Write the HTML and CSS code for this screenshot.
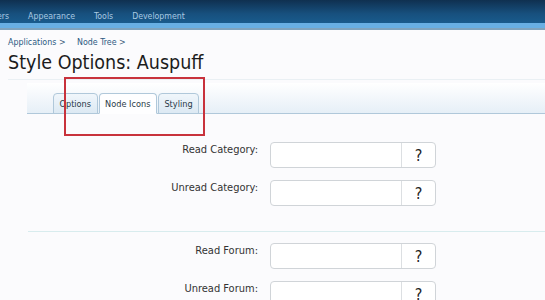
FILE: index.html
```html
<!DOCTYPE html>
<html lang="en">
<head>
    <meta charset="UTF-8">
    <title>Style Options: Auspuff</title>
    <link rel="stylesheet" href="styles.css">
</head>
<body>

    <!-- Admin navigation -->
    <div class="top-nav">
        <a href="#">ers</a>
        <a href="#">Appearance</a>
        <a href="#">Tools</a>
        <a href="#">Development</a>
    </div>
    <div class="nav-strip"></div>

    <div class="page">
        <div class="breadcrumb">
            <a href="#">Applications</a> <span class="sep">&gt;</span>
            <a href="#">Node Tree</a> <span class="sep">&gt;</span>
        </div>
        <h1 class="page-title">Style Options: Auspuff</h1>

        <div class="tab-bar">
            <span class="tab">Options</span>
            <span class="tab active">Node Icons</span>
            <span class="tab">Styling</span>
            <div class="highlight-box"></div>
        </div>

        <div class="options-form">
            <div class="form-row">
                <label>Read Category:</label>
                <div class="icon-input"><input type="text"><span class="help">?</span></div>
            </div>
            <div class="form-row">
                <label>Unread Category:</label>
                <div class="icon-input"><input type="text"><span class="help">?</span></div>
            </div>

            <hr class="form-divider">

            <div class="form-row">
                <label>Read Forum:</label>
                <div class="icon-input"><input type="text"><span class="help">?</span></div>
            </div>
            <div class="form-row">
                <label>Unread Forum:</label>
                <div class="icon-input"><input type="text"><span class="help">?</span></div>
            </div>
        </div>
    </div>

</body>
</html>
```

FILE: styles.css
```css
/* Basic page setup */
body {
    margin: 0;
    background: #fbfbfd;
    font-family: "DejaVu Sans Condensed", "DejaVu Sans", sans-serif;
    font-size: 11px;
    color: #333;
    overflow: hidden;
}

/* Admin navigation bar */
.top-nav {
    height: 23px;
    background: linear-gradient(to bottom, #0f3050, #17507e 60%, #195b8c);
    display: flex;
    align-items: center;
    gap: 19px;
    margin-left: -3px;
}

.top-nav a {
    color: #a9c9e2;
    text-decoration: none;
    font-size: 8.7px;
    padding-top: 8px;
}

.nav-strip {
    height: 5px;
    background: #68afe3;
    border-bottom: 2px solid #7fa3bd;
}

.page {
    position: relative;
}

.breadcrumb {
    padding: 7px 0 0 8px;
    color: #3a5a78;
    font-size: 8.8px;
}

.breadcrumb a {
    color: #2c5a82;
    text-decoration: none;
}

.breadcrumb .sep {
    margin-right: 9px;
}

.page-title {
    margin: 4px 0 0 8px;
    padding-bottom: 5px;
    font-size: 19.5px;
    font-weight: normal;
    color: #1c1c1c;
    border-bottom: 1px solid #eaf0f4;
}

/* Tabs */
.tab-bar {
    position: relative;
    margin: 3px 0 0 27px;
    height: 30px;
    padding-left: 26px;
    display: flex;
    align-items: flex-end;
    background: linear-gradient(to bottom, #ffffff, #e6eff7);
    border-bottom: 1px solid #b0c8da;
}

.tab {
    height: 19px;
    line-height: 20px;
    padding: 0 5.5px;
    margin-bottom: -1px;
    margin-right: 1px;
    border: 1px solid #b0c8da;
    border-radius: 4px 4px 0 0;
    background: linear-gradient(to bottom, #f0f6fb, #dce9f3);
    color: #2a3a48;
    font-size: 9.1px;
}

.tab.active {
    background: #fefeff;
    border-bottom-color: #fefeff;
}

.highlight-box {
    position: absolute;
    left: 37px;
    top: -6px;
    width: 137px;
    height: 55px;
    border: 2px solid #c8323c;
}

/* Form rows */
.options-form {
    margin: 28px 0 0 28px;
}

.form-row {
    display: flex;
    gap: 12px;
    margin-bottom: 12px;
}

.form-row label {
    width: 230px;
    text-align: right;
    padding-top: 1px;
    color: #333;
}

.icon-input {
    display: flex;
    width: 164px;
    height: 24px;
    border: 1px solid #d0d4d8;
    border-radius: 4px;
    background: #fff;
}

.icon-input input {
    flex: 1;
    min-width: 0;
    border: none;
    background: transparent;
    outline: none;
}

.help {
    width: 33px;
    border-left: 1px solid #dcdfe2;
    text-align: center;
    line-height: 26px;
    font-size: 16px;
    color: #222;
}

.form-divider {
    margin: 25px 0 11px 0;
    border: none;
    border-top: 1px solid #d8ecee;
}
```
